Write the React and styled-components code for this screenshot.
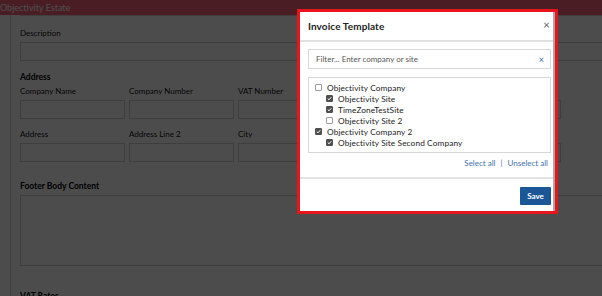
import React, { useState } from "react"
import styled, { createGlobalStyle } from "styled-components"

const GlobalStyle = createGlobalStyle`
  html, body {
    margin: 0;
    padding: 0;
    background: #fff;
    font-family: "Lato", "Open Sans", sans-serif;
    overflow: hidden;
  }
`

const sites = [
  { name: "Objectivity Company", level: 0, checked: false },
  { name: "Objectivity Site", level: 1, checked: true },
  { name: "TimeZoneTestSite", level: 1, checked: true },
  { name: "Objectivity Site 2", level: 1, checked: false },
  { name: "Objectivity Company 2", level: 0, checked: true },
  { name: "Objectivity Site Second Company", level: 1, checked: true },
]

const CheckMark = () => (
  <svg width="5" height="5" viewBox="0 0 10 10">
    <path d="M1.5 5.2 L4 7.6 L8.6 2.4" fill="none" stroke="#fff" strokeWidth="2" />
  </svg>
)

const App = () => {
  const [items, setItems] = useState(sites)

  const toggle = idx =>
    setItems(items.map((it, i) => (i === idx ? { ...it, checked: !it.checked } : it)))

  return (
    <>
      <GlobalStyle />
      <Page>
        <TopBar>Objectivity Estate</TopBar>
        <Body>
          <Sidebar />
          <Content>
            <CutInput />
            <Label $top={12}>Description</Label>
            <Input $wide />
            <SectionTitle $top={11}>Address</SectionTitle>
            <FieldGrid>
              {["Company Name", "Company Number", "VAT Number", "", ""].map((l, i) => (
                <Field key={i}>
                  <Label>{l}</Label>
                  <Input />
                </Field>
              ))}
            </FieldGrid>
            <FieldGrid $top={10}>
              {["Address", "Address Line 2", "City", "", ""].map((l, i) => (
                <Field key={i}>
                  <Label>{l}</Label>
                  <Input />
                </Field>
              ))}
            </FieldGrid>
            <SectionTitle $top={19}>Footer Body Content</SectionTitle>
            <TextArea />
            <SectionTitle $top={25}>VAT Rates</SectionTitle>
          </Content>
        </Body>
      </Page>

      <Backdrop />

      <Highlight>
        <Modal>
          <ModalHeader>
            <ModalTitle>Invoice Template</ModalTitle>
            <CloseBtn>×</CloseBtn>
          </ModalHeader>
          <ModalBody>
            <Filter>
              <FilterText>Filter... Enter company or site</FilterText>
              <ClearBtn>×</ClearBtn>
            </Filter>
            <TreeBox>
              {items.map((it, idx) => (
                <TreeRow key={idx} $level={it.level} onClick={() => toggle(idx)}>
                  <Check $checked={it.checked}>{it.checked && <CheckMark />}</Check>
                  <span>{it.name}</span>
                </TreeRow>
              ))}
            </TreeBox>
            <Links>
              <LinkText>Select all</LinkText>
              <Sep>|</Sep>
              <LinkText>Unselect all</LinkText>
            </Links>
          </ModalBody>
          <ModalFooter>
            <SaveButton>Save</SaveButton>
          </ModalFooter>
        </Modal>
      </Highlight>
    </>
  )
}

export default App

const Page = styled.div`
  min-height: 296px;
  background: #fff;
`

const TopBar = styled.div`
  height: 15px;
  background: #f9617a;
  color: #fff;
  font-size: 9px;
  line-height: 15px;
  white-space: nowrap;
`

const Body = styled.div`
  display: flex;
`

const Sidebar = styled.div`
  width: 10px;
  border-right: 1px solid #d4d4d4;
  min-height: 290px;
  flex-shrink: 0;
`

const Content = styled.div`
  flex: 1;
  padding-left: 9px;
  display: flex;
  flex-direction: column;
`

const CutInput = styled.div`
  height: 0;
  border-bottom: 1px solid #d4d4d4;
`

const Label = styled.div`
  font-size: 8px;
  color: #111;
  height: 10px;
  line-height: 10px;
  margin-top: ${p => p.$top || 0}px;
  margin-bottom: 4px;
  white-space: nowrap;
`

const SectionTitle = styled.div`
  font-size: 8.5px;
  font-weight: 700;
  color: #000;
  line-height: 11px;
  margin-top: ${p => p.$top || 0}px;
  margin-bottom: 3px;
  white-space: nowrap;
`

const Input = styled.div`
  height: 17px;
  border: 1px solid #d0d0d0;
  width: ${p => (p.$wide ? "620px" : "auto")};
`

const FieldGrid = styled.div`
  display: grid;
  grid-template-columns: repeat(5, 105px);
  column-gap: 4px;
  margin-top: ${p => p.$top || 0}px;
`

const Field = styled.div`
  display: flex;
  flex-direction: column;
`

const TextArea = styled.div`
  height: 69px;
  width: 620px;
  border: 1px solid #d0d0d0;
`

const Backdrop = styled.div`
  position: fixed;
  inset: 0;
  background: rgba(0, 0, 0, 0.7);
`

const Highlight = styled.div`
  position: fixed;
  left: 297px;
  top: 9px;
  border: 3px solid #e8151d;
`

const Modal = styled.div`
  width: 253px;
  background: #fff;
  border-right: 2px solid #a9a9a9;
  display: flex;
  flex-direction: column;
`

const ModalHeader = styled.div`
  height: 28px;
  display: flex;
  align-items: center;
  justify-content: space-between;
  padding: 0 3px 0 8px;
  border-bottom: 2px solid #e2e2e2;
`

const ModalTitle = styled.div`
  font-size: 10px;
  font-weight: 700;
  color: #222;
  letter-spacing: 0.1px;
`

const CloseBtn = styled.div`
  font-size: 12px;
  color: #666;
  line-height: 1;
  margin-top: -2px;
`

const ModalBody = styled.div`
  padding: 7px 2px 8px 8px;
  border-bottom: 2px solid #e2e2e2;
`

const Filter = styled.div`
  height: 18px;
  border: 1px solid #d8d8d8;
  display: flex;
  align-items: center;
  justify-content: space-between;
  padding: 0 6px 0 7px;
`

const FilterText = styled.div`
  font-size: 8px;
  color: #555;
`

const ClearBtn = styled.div`
  font-size: 9px;
  color: #3a6ea8;
  line-height: 1;
`

const TreeBox = styled.div`
  margin-top: 8px;
  height: 66px;
  border: 1px solid #d8d8d8;
  padding: 4px 0 4px 6px;
`

const TreeRow = styled.div`
  height: 11px;
  display: flex;
  align-items: center;
  gap: 5px;
  padding-left: ${p => p.$level * 11}px;
  font-size: 8.3px;
  letter-spacing: 0.1px;
  color: #222;
  white-space: nowrap;
  cursor: pointer;
`

const Check = styled.span`
  width: 7px;
  height: 7px;
  box-sizing: border-box;
  border-radius: 1px;
  border: 1px solid ${p => (p.$checked ? "#4e4e4e" : "#9a9a9a")};
  background: ${p => (p.$checked ? "#4e4e4e" : "#fff")};
  display: inline-flex;
  align-items: center;
  justify-content: center;
  flex-shrink: 0;
`

const Links = styled.div`
  display: flex;
  justify-content: flex-end;
  align-items: center;
  gap: 5px;
  margin-top: 4px;
  padding-right: 3px;
  height: 12px;
  font-size: 8px;
`

const LinkText = styled.span`
  color: #3f72ab;
  cursor: pointer;
`

const Sep = styled.span`
  color: #3f72ab;
`

const ModalFooter = styled.div`
  display: flex;
  justify-content: flex-end;
  padding: 8px 2px 6px 8px;
`

const SaveButton = styled.button`
  height: 18px;
  width: 31px;
  padding: 0;
  border: none;
  border-radius: 1px;
  background: #1b5796;
  color: #fff;
  font-family: inherit;
  font-size: 8px;
  font-weight: 700;
`
